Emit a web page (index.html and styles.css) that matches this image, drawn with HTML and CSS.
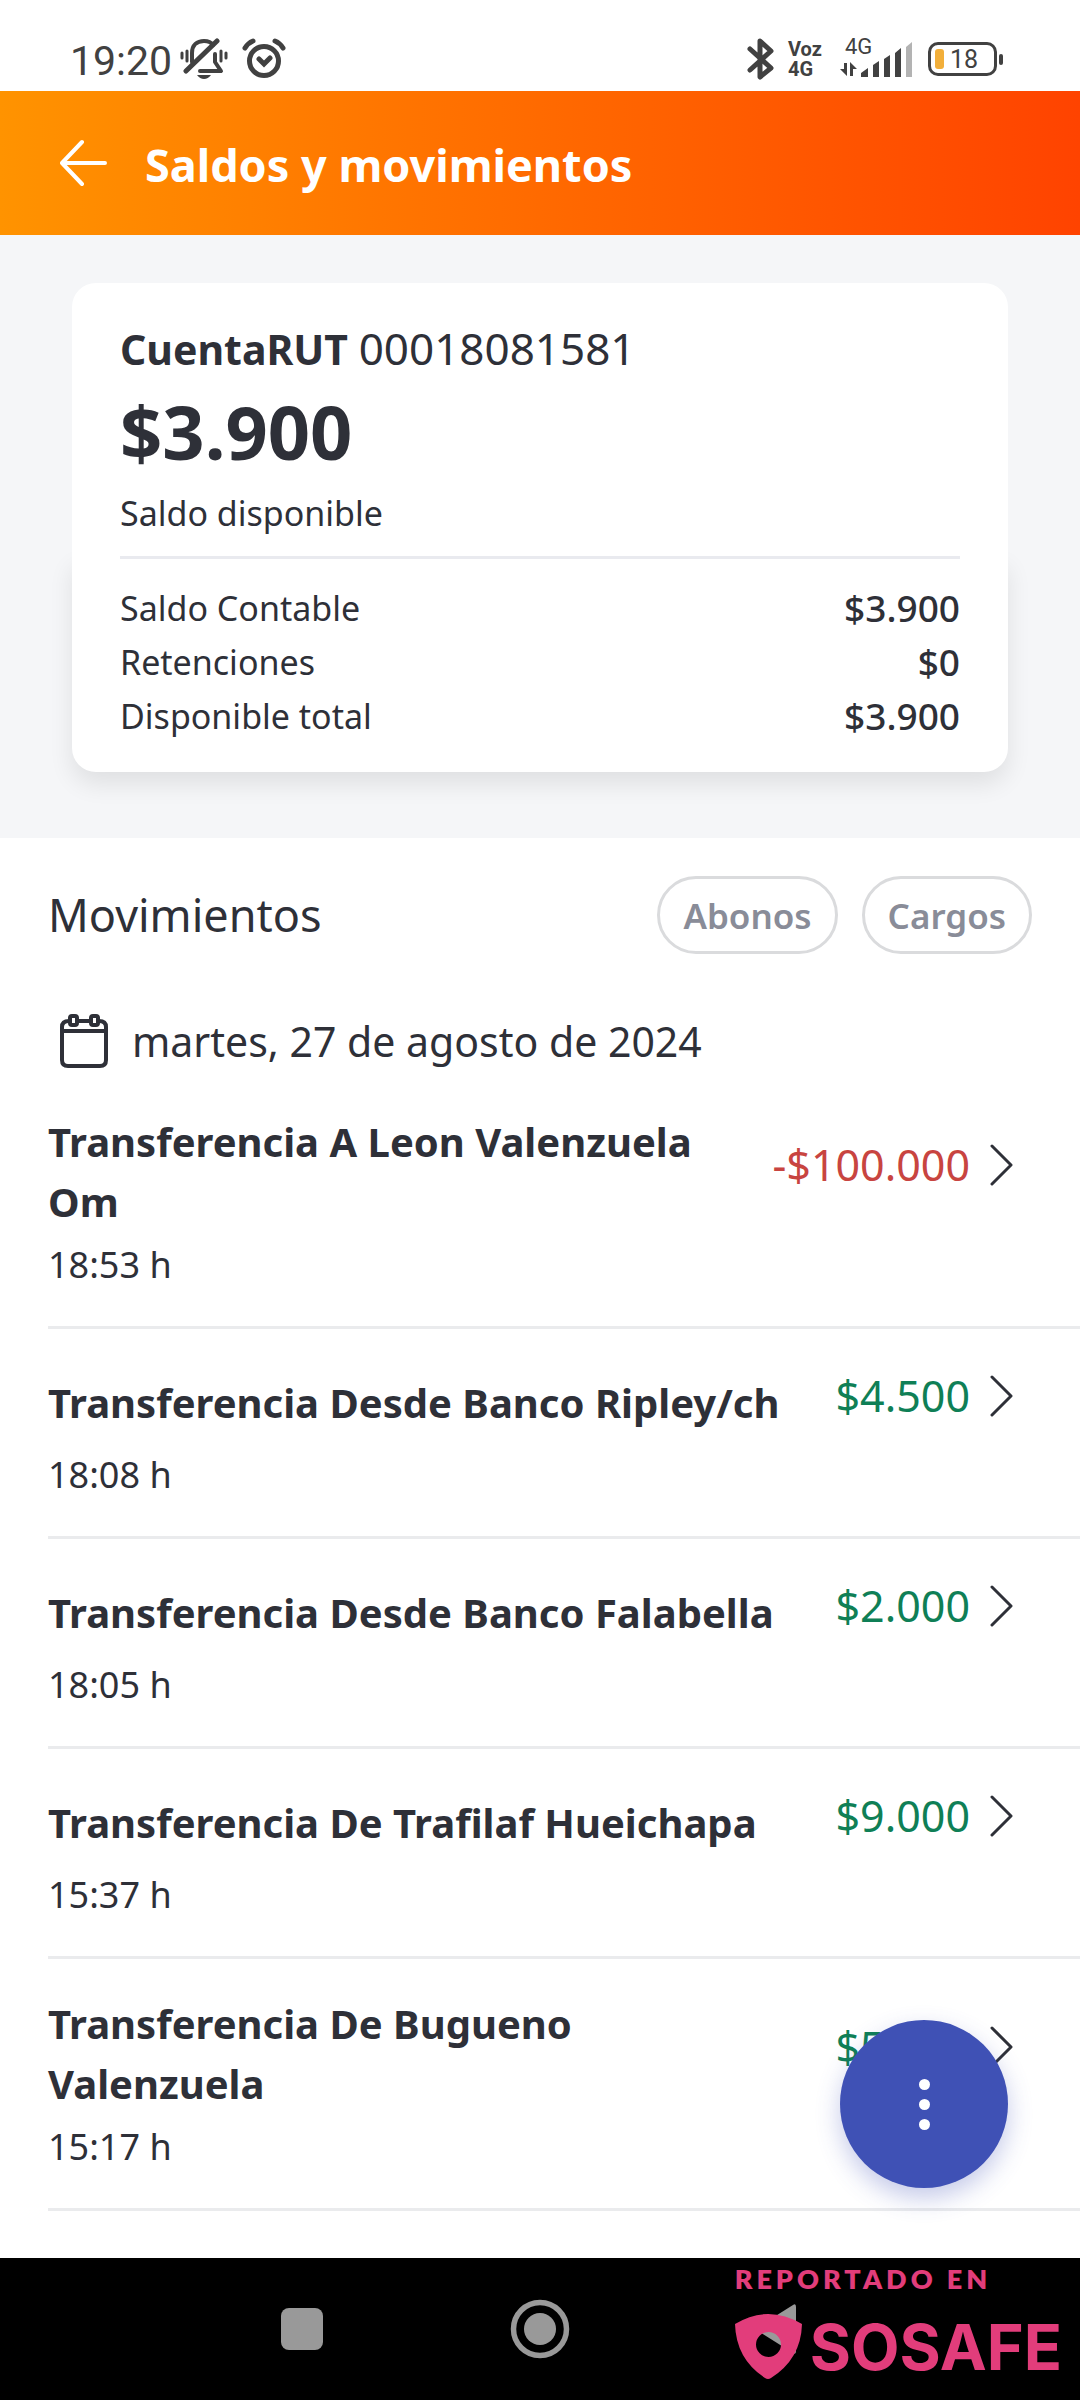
FILE: index.html
```
<!DOCTYPE HTML>
<html lang="es">
<head>
  <meta charset="utf-8">
  <meta name="format-detection" content="telephone=no">
  <meta name="viewport" content="width=device-width, initial-scale=1.0">
  <title>Saldos y movimientos</title>
  <link rel="stylesheet" href="styles.css">
</head>
<body>
<div class="status">
  <span class="clock">19:20</span>
  <svg class="ico-bell" width="48" height="42" viewBox="0 0 48 42" fill="none" stroke="#414141" stroke-width="4" stroke-linecap="round">
    <path d="M12 24V15C12 7 17 3 24 3C28 3 31 4 33 7"/>
    <path d="M6 33L37 3" stroke-width="5"/>
    <path d="M35 16V24L41 33H20" stroke-linejoin="round"/>
    <path d="M2 15V20M7 13V23M41 13V23M46 15V20" stroke-width="3"/>
    <path d="M17 37H31Q28 41 24 41T17 37Z" fill="#414141" stroke="none"/>
  </svg>
  <svg class="ico-alarm" width="44" height="42" viewBox="0 0 44 42" fill="none" stroke="#414141" stroke-width="5" stroke-linecap="round">
    <circle cx="22" cy="23" r="14.5"/>
    <path d="M17 21L22 26L28 20M3 10Q6 5 11 3M33 3Q38 5 41 10"/>
  </svg>
  <svg class="ico-bt" width="28" height="44" viewBox="0 0 28 44" fill="none" stroke="#414141" stroke-width="5" stroke-linejoin="round" stroke-linecap="round">
    <path d="M3 12L24 31L13 40V4L24 14L3 33"/>
  </svg>
  <div class="volte"><span>Voz</span><span>4G</span></div>
  <div class="signal">
    <span class="net">4G</span>
    <svg width="74" height="38" viewBox="0 0 74 38" fill="#414141">
      <path d="M7 23V36L0 29H4V23ZM10 36V22L17 29H13V36Z"/>
      <path d="M21 37V33L28 28V37ZM33 37V25L39 21V37ZM44 37V19L50 15V37ZM55 37V13L61 8V37Z"/>
      <path fill="#b3b3b3" d="M66 37V7L72 2V37Z"/>
    </svg>
  </div>
  <div class="battery"><i></i><span>18</span></div>
</div>

<header class="bar">
  <button class="back" aria-label="Volver">
    <svg width="48" height="48" viewBox="0 0 48 48" fill="none" stroke="#fff" stroke-width="4" stroke-linecap="round" stroke-linejoin="round">
      <path d="M45 24H3M22 3L2 24L22 45"/>
    </svg>
  </button>
  <h1>Saldos y movimientos</h1>
</header>

<main>
  <section class="hero">
    <div class="card-top">
      <p class="account"><b>CuentaRUT</b> <span>00018081581</span></p>
      <p class="balance">$3.900</p>
      <p class="label">Saldo disponible</p>
    </div>
    <div class="card-bottom">
      <dl>
        <dt>Saldo Contable</dt><dd>$3.900</dd>
        <dt>Retenciones</dt><dd>$0</dd>
        <dt>Disponible total</dt><dd>$3.900</dd>
      </dl>
    </div>
  </section>

  <section class="moves">
    <div class="moves-head">
      <h2>Movimientos</h2>
      <button class="chip">Abonos</button>
      <button class="chip">Cargos</button>
    </div>
    <div class="date">
      <svg width="48" height="54" viewBox="0 0 48 54" fill="none" stroke="#2e3038" stroke-width="4">
        <path d="M9 7Q2 7 2 13V46Q2 52 8 52H40Q46 52 46 46V13Q46 7 39 7M17 7H31M2 17H46"/>
        <rect x="10" y="2" width="7" height="9" rx="2"/>
        <rect x="31" y="2" width="7" height="9" rx="2"/>
      </svg>
      <span>martes, 27 de agosto de 2024</span>
    </div>
    <ul class="list">
      <li>
        <a class="row" href="#">
          <b>Transferencia A Leon Valenzuela Om</b>
          <span class="amount minus">-$100.000</span>
          <svg class="chev" width="24" height="42" viewBox="0 0 24 42"><path d="M2 2L21 21L2 40"/></svg>
        </a>
        <time>18:53 h</time>
      </li>
      <li>
        <a class="row" href="#">
          <b>Transferencia Desde Banco Ripley/ch</b>
          <span class="amount">$4.500</span>
          <svg class="chev" width="24" height="42" viewBox="0 0 24 42"><path d="M2 2L21 21L2 40"/></svg>
        </a>
        <time>18:08 h</time>
      </li>
      <li>
        <a class="row" href="#">
          <b>Transferencia Desde Banco Falabella</b>
          <span class="amount">$2.000</span>
          <svg class="chev" width="24" height="42" viewBox="0 0 24 42"><path d="M2 2L21 21L2 40"/></svg>
        </a>
        <time>18:05 h</time>
      </li>
      <li>
        <a class="row" href="#">
          <b>Transferencia De Trafilaf Hueichapa</b>
          <span class="amount">$9.000</span>
          <svg class="chev" width="24" height="42" viewBox="0 0 24 42"><path d="M2 2L21 21L2 40"/></svg>
        </a>
        <time>15:37 h</time>
      </li>
      <li>
        <a class="row" href="#">
          <b>Transferencia De Bugueno Valenzuela</b>
          <span class="amount">$5.000</span>
          <svg class="chev" width="24" height="42" viewBox="0 0 24 42"><path d="M2 2L21 21L2 40"/></svg>
        </a>
        <time>15:17 h</time>
      </li>
    </ul>
  </section>

  <button class="fab" aria-label="Opciones"><i></i><i></i><i></i></button>
</main>

<nav class="nav">
  <svg width="60" height="60" viewBox="0 0 60 60"><rect x="9" y="9" width="42" height="42" rx="8" fill="#999"/></svg>
  <svg width="60" height="60" viewBox="0 0 60 60"><circle cx="30" cy="30" r="26.5" fill="none" stroke="#999" stroke-width="5.5"/><circle cx="30" cy="30" r="16" fill="#999"/></svg>
  <svg width="60" height="60" viewBox="0 0 60 60"><path d="M7 30L45 6Q48 4 48 8V52Q48 56 45 54Z" fill="#999"/></svg>

  <!-- sello sosafe -->
  <div class="stamp">
    <span class="stamp-top">REPORTADO EN</span>
    <div class="stamp-logo">
      <svg width="68" height="66" viewBox="0 0 68 66">
        <path fill="#e23d7b" fill-rule="evenodd" d="M0 10Q33 -10 67 10Q66 45 36 64Q33 66 30 64Q1 45 0 10ZM33.500 18A12.500 12.500 0 1 0 33.500 43A12.500 12.500 0 1 0 33.500 18Z"/>
      </svg>
      <span>SOSAFE</span>
    </div>
  </div>
</nav>
</body>
</html>
```
FILE: styles.css
```
*{box-sizing: border-box;}
body,h1,h2,p,ul,dl,dd{margin: 0;padding: 0;}
body{display: flex;flex-direction: column;min-height: 100vh;background-color: #fff;color: #2e3038;font-family: "Noto Sans","Open Sans",sans-serif;}
button{padding: 0;border: 0;background: none;font-family: inherit;}
svg{display: block;flex: none;}

/* status bar */
.status{display: flex;align-items: center;height: 91px;padding: 26px 83px 0 70px;color: #414141;font-family: Roboto,sans-serif;}
.clock{padding-top: 4px;font-size: 41px;line-height: 48px;}
.ico-bell{margin-left: 8px;}
.ico-alarm{margin-left: 14px;}
.ico-bt{margin-left: auto;}
.volte{width: 40px;margin-left: 13px;font: bold 20px/20px Roboto,sans-serif;}
.volte span{display: block;}
.signal{position: relative;margin-left: 12px;}
.net{position: absolute;left: 5px;top: -4px;font-size: 22px;line-height: 22px;}
.battery{position: relative;display: flex;align-items: center;width: 69px;height: 34px;margin-left: 14px;padding-left: 4px;border: 3px solid #414141;border-radius: 10px;}
.battery i{width: 9px;height: 20px;border-radius: 3px;background-color: #f2af3a;}
.battery span{margin-left: 6px;padding-top: 2px;font-size: 25px;line-height: 28px;}
.battery:after{content: "";position: absolute;right: -9px;top: 9px;width: 4px;height: 11px;border-radius: 2px;background-color: #414141;}

/* header */
.bar{display: flex;align-items: center;height: 144px;padding-left: 60px;background: linear-gradient(90deg,#ff9300,#ff6a00 50%,#ff4300);color: #fff;}
.back{margin-right: 37px;}
.bar h1{padding-top: 4px;font-size: 45px;line-height: 60px;}

/* card */
.hero{padding: 48px 72px 66px;background-color: #f5f6f8;}
.card-top,.card-bottom{padding: 0 48px;background-color: #fff;}
.card-top{position: relative;z-index: 1;padding-top: 35px;border-radius: 24px 24px 0 0;}
.card-bottom{padding-bottom: 29px;border-radius: 0 0 24px 24px;box-shadow: 0 12px 24px rgba(0,0,0,.09);}
.account{font-size: 41px;line-height: 60px;}
.account span{font-size: 44px;}
.balance{margin-top: 8px;font-size: 74px;font-weight: bold;line-height: 90px;}
.label{padding: 9px 0 16px;font-size: 34px;line-height: 54px;}
.card-bottom dl{display: grid;grid-template-columns: 1fr auto;padding-top: 22px;border-top: 3px solid #e9eaef;font-size: 34px;line-height: 54px;}
.card-bottom dd{font-size: 37px;font-weight: 500;text-align: right;}

/* movements */
.moves{padding-left: 48px;}
.moves-head{display: flex;align-items: center;gap: 24px;padding: 38px 48px 57px 0;}
.moves-head h2{flex: 1;font-size: 45px;font-weight: normal;line-height: 60px;}
.chip{height: 78px;padding: 0 23px;border: 3px solid #dadbdd;border-radius: 39px;color: #898c98;font-size: 35px;font-weight: 600;}
.date{display: flex;align-items: center;gap: 24px;height: 60px;padding-left: 12px;font-size: 41px;}
.list{list-style: none;}
.list li{padding: 35px 0 34px;border-bottom: 3px solid #eaebed;}
.list li:first-child{padding-top: 41px;}
.row{display: flex;align-items: center;min-height: 78px;padding-right: 66px;color: inherit;text-decoration: none;}
.row b{flex: 1;margin-right: 50px;font-size: 40px;line-height: 60px;}
.amount,.chev{margin-bottom: 14px;}
.amount{color: #0f7f56;font-size: 43px;line-height: 60px;}
.minus{color: #c84440;}
.chev{margin-left: 20px;fill: none;stroke: #2e3038;stroke-width: 3;stroke-linecap: round;stroke-linejoin: round;}
.list time{display: block;padding-top: 6px;font-size: 36px;line-height: 54px;}

main{position: relative;flex: 1;}
.fab{position: absolute;right: 72px;bottom: 70px;display: flex;flex-direction: column;align-items: center;justify-content: center;gap: 9px;width: 168px;height: 168px;border-radius: 50%;background-color: #3f51b5;box-shadow: 0 10px 24px rgba(63,81,181,.3);}
.fab i{width: 11px;height: 11px;border-radius: 50%;background-color: #fff;}

/* bottom nav */
.nav{position: relative;display: flex;align-items: center;justify-content: center;gap: 178px;height: 142px;background-color: #000;}
.stamp{position: absolute;right: 18px;bottom: 20px;color: #e23d7b;}
.stamp-top{display: block;font: 800 27px/32px Lato,sans-serif;letter-spacing: 4px;}
.stamp-logo{display: flex;align-items: center;gap: 7px;margin-top: 19px;}
.stamp-logo span{font: bold 63px/66px Inter,sans-serif;}
```
